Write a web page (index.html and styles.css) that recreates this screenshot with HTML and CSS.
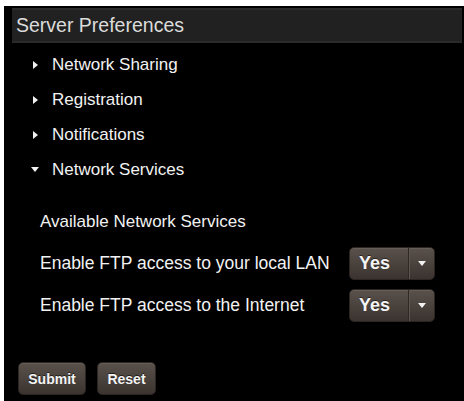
FILE: index.html
```html
<!DOCTYPE html>
<html>
<head>
<meta charset="utf-8">
<link rel="stylesheet" href="styles.css">
</head>
<body>
<div class="page">
  <div class="header">Server Preferences</div>
  <ul class="menu">
    <li class="item"><span class="tri-right"></span><span>Network Sharing</span></li>
    <li class="item"><span class="tri-right"></span><span>Registration</span></li>
    <li class="item"><span class="tri-right"></span><span>Notifications</span></li>
    <li class="item"><span class="tri-down"></span><span>Network Services</span></li>
  </ul>
  <div class="services">
    <div class="section-title">Available Network Services</div>
    <div class="row">
      <div class="label">Enable FTP access to your local LAN</div>
      <div class="select"><span class="value">Yes</span><span class="arrow"><span class="tri-small"></span></span></div>
    </div>
    <div class="row row-second">
      <div class="label">Enable FTP access to the Internet</div>
      <div class="select"><span class="value">Yes</span><span class="arrow"><span class="tri-small"></span></span></div>
    </div>
  </div>
  <div class="actions">
    <button class="btn btn-submit">Submit</button>
    <button class="btn btn-reset">Reset</button>
  </div>
</div>
</body>
</html>
```
FILE: styles.css
```css
html, body {
  margin: 0;
  padding: 0;
  background: #ffffff;
}
body {
  font-family: "Liberation Sans", Arial, sans-serif;
}
.page {
  margin: 6px 0 0 4px;
  background: #000;
  min-height: 395px;
  padding: 2px 2px 0 8px;
  box-sizing: border-box;
  color: #f2f2f2;
}
.header {
  height: 35px;
  box-sizing: border-box;
  background: #212121;
  border-top: 2px solid #2a2a2a;
  border-bottom: 2px solid #2a2a2a;
  color: #dcdcdc;
  font-size: 19.5px;
  line-height: 31px;
  padding-left: 4px;
}
.menu {
  list-style: none;
  margin: 4px 0 0 0;
  padding: 0 0 0 18px;
}
.item {
  height: 35px;
  display: flex;
  align-items: center;
  gap: 12px;
  font-size: 17px;
}
.tri-right, .tri-down {
  width: 10px;
  height: 10px;
  display: flex;
  align-items: center;
  justify-content: center;
  flex: none;
}
.tri-right::before {
  content: "";
  border-left: 5px solid #f2f2f2;
  border-top: 4px solid transparent;
  border-bottom: 4px solid transparent;
}
.tri-down::before {
  content: "";
  border-top: 5px solid #f2f2f2;
  border-left: 4px solid transparent;
  border-right: 4px solid transparent;
}
.services {
  margin-top: 24px;
  padding-left: 28px;
}
.section-title {
  height: 22px;
  line-height: 22px;
  font-size: 17px;
}
.row {
  display: flex;
  align-items: center;
  margin-top: 14px;
  height: 33px;
}
.row-second {
  margin-top: 9px;
}
.label {
  width: 309px;
  font-size: 17.5px;
}
.select {
  width: 86px;
  height: 33px;
  box-sizing: border-box;
  display: flex;
  border-radius: 5px;
  background: linear-gradient(#5a514b, #3a332f);
  border: 1px solid #2b2622;
  box-shadow: inset 0 1px 0 rgba(255,255,255,0.08);
}
.value {
  width: 59px;
  box-sizing: border-box;
  padding-left: 9px;
  font-weight: bold;
  font-size: 18px;
  line-height: 31px;
  color: #f4f4f4;
  text-shadow: 0 -1px 0 rgba(0,0,0,0.5);
  border-right: 1px solid #2e2925;
  box-shadow: 1px 0 0 #5e5550;
}
.arrow {
  flex: 1;
  display: flex;
  align-items: center;
  justify-content: center;
}
.tri-small {
  width: 0;
  height: 0;
  border-top: 5px solid #f2f2f2;
  border-left: 4px solid transparent;
  border-right: 4px solid transparent;
}
.actions {
  display: flex;
  gap: 11px;
  padding-left: 6px;
  margin-top: 40px;
}
.btn {
  height: 33px;
  box-sizing: border-box;
  border-radius: 5px;
  background: linear-gradient(#5a514b, #3a332f);
  border: 1px solid #2b2622;
  box-shadow: inset 0 1px 0 rgba(255,255,255,0.08);
  color: #f4f4f4;
  font-family: "Liberation Sans", Arial, sans-serif;
  font-weight: bold;
  font-size: 14px;
  text-shadow: 0 -1px 0 rgba(0,0,0,0.6);
  padding: 0;
  cursor: pointer;
}
.btn-submit {
  width: 68px;
}
.btn-reset {
  width: 59px;
}
```
